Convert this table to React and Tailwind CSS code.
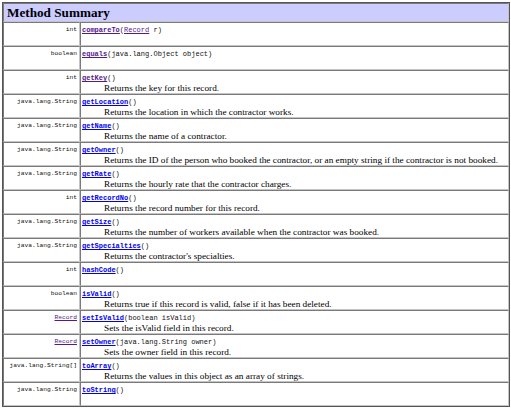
const VISITED = "text-[#551a8b]";
const LINK = "text-[#0000ee]";

const methods = [
  { type: "int", name: "compareTo", args: [["(", null], ["Record", "link"], [" r)", null]], seen: true },
  { type: "boolean", name: "equals", args: [["(java.lang.Object object)", null]], seen: true },
  { type: "int", name: "getKey", args: [["()", null]], seen: true, desc: "Returns the key for this record." },
  { type: "java.lang.String", name: "getLocation", args: [["()", null]], desc: "Returns the location in which the contractor works." },
  { type: "java.lang.String", name: "getName", args: [["()", null]], desc: "Returns the name of a contractor." },
  {
    type: "java.lang.String",
    name: "getOwner",
    args: [["()", null]],
    desc: "Returns the ID of the person who booked the contractor, or an empty string if the contractor is not booked.",
  },
  { type: "java.lang.String", name: "getRate", args: [["()", null]], desc: "Returns the hourly rate that the contractor charges." },
  { type: "int", name: "getRecordNo", args: [["()", null]], desc: "Returns the record number for this record." },
  {
    type: "java.lang.String",
    name: "getSize",
    args: [["()", null]],
    desc: "Returns the number of workers available when the contractor was booked.",
  },
  { type: "java.lang.String", name: "getSpecialties", args: [["()", null]], desc: "Returns the contractor's specialties." },
  { type: "int", name: "hashCode", args: [["()", null]] },
  {
    type: "boolean",
    name: "isValid",
    args: [["()", null]],
    desc: "Returns true if this record is valid, false if it has been deleted.",
  },
  { type: "Record", typeLink: true, name: "setIsValid", args: [["(boolean isValid)", null]], desc: "Sets the isValid field in this record." },
  { type: "Record", typeLink: true, name: "setOwner", args: [["(java.lang.String owner)", null]], desc: "Sets the owner field in this record." },
  {
    type: "java.lang.String[]",
    name: "toArray",
    args: [["()", null]],
    desc: "Returns the values in this object as an array of strings.",
  },
  { type: "java.lang.String", name: "toString", args: [["()", null]] },
];

const cell =
  "h-[24px] align-top border border-t-[#7a7a7a] border-l-[#7a7a7a] border-b-[#c4c4c4] border-r-[#c4c4c4] p-0 leading-none text-[7px]";

function Row({ m }) {
  return (
    <tr>
      <td className={`${cell} text-right pr-[2px]`}>
        <div className="pt-[2px] leading-[10px] text-[6.25px] font-['Liberation_Mono',monospace] text-[#111]">
          {m.typeLink ? <a className={`${VISITED} underline`}>{m.type}</a> : m.type}
        </div>
      </td>
      <td className={`${cell} pl-[1px]`}>
        <div className="pt-[2px] leading-[10px] text-[7px] font-['Liberation_Mono',monospace] text-[#111] whitespace-nowrap">
          <a className={`${m.seen ? VISITED : LINK} font-bold underline`}>{m.name}</a>
          {m.args.map(([t, kind], i) =>
            kind ? (
              <a key={i} className={`${VISITED} underline`}>
                {t}
              </a>
            ) : (
              <span key={i} className="whitespace-pre">
                {t}
              </span>
            )
          )}
        </div>
        {m.desc && (
          <div className="pl-[22px] leading-[10px] text-[9.25px] font-['Liberation_Serif',serif] text-black whitespace-nowrap">
            {m.desc}
          </div>
        )}
      </td>
    </tr>
  );
}

export default function App() {
  return (
    <div className="w-[511px] h-[408px] bg-white overflow-hidden pt-[2px] pl-[2px]">
      <table className="w-[508px] border-separate border-spacing-0 border border-[#555] table-fixed">
        <colgroup>
          <col className="w-[77px]" />
          <col />
        </colgroup>
        <tbody>
          <tr>
            <th
              colSpan={2}
              className="h-[19px] bg-[#ccccff] text-left align-middle border border-t-[#7a7a7a] border-l-[#7a7a7a] border-b-[#c4c4c4] border-r-[#c4c4c4] py-0 pr-0 pl-[3px] leading-none text-[13px]"
            >
              <span className="font-['Liberation_Serif',serif] font-bold text-[13.2px] text-black leading-none">
                Method Summary
              </span>
            </th>
          </tr>
          {methods.map((m) => (
            <Row key={m.name} m={m} />
          ))}
        </tbody>
      </table>
    </div>
  );
}
